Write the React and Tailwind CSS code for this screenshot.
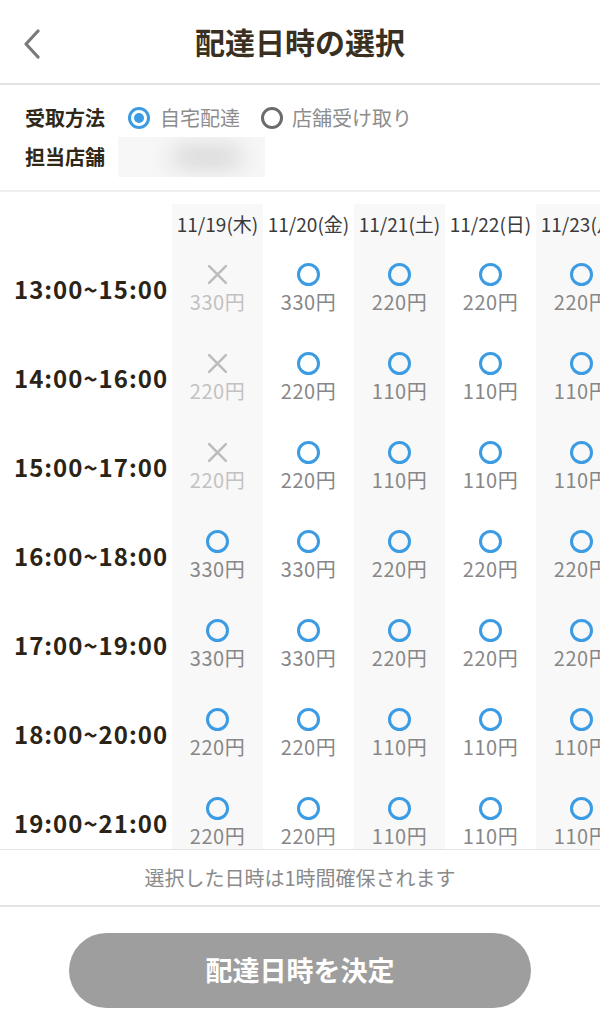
import React from 'react';

const font = { fontFamily: '"Noto Sans CJK JP", "Noto Sans", sans-serif' };

const dates = ['11/19(木)', '11/20(金)', '11/21(土)', '11/22(日)', '11/23(月)'];

// [time, [[available, price], ...]]
const slots = [
  ['13:00~15:00', [[false, 330], [true, 330], [true, 220], [true, 220], [true, 220]]],
  ['14:00~16:00', [[false, 220], [true, 220], [true, 110], [true, 110], [true, 110]]],
  ['15:00~17:00', [[false, 220], [true, 220], [true, 110], [true, 110], [true, 110]]],
  ['16:00~18:00', [[true, 330], [true, 330], [true, 220], [true, 220], [true, 220]]],
  ['17:00~19:00', [[true, 330], [true, 330], [true, 220], [true, 220], [true, 220]]],
  ['18:00~20:00', [[true, 220], [true, 220], [true, 110], [true, 110], [true, 110]]],
  ['19:00~21:00', [[true, 220], [true, 220], [true, 110], [true, 110], [true, 110]]],
];

const Radio = ({ checked }) => (
  <span
    className={`flex items-center justify-center w-[22px] h-[22px] rounded-full border-[3px] ${
      checked ? 'border-[#3b9be3]' : 'border-[#6b6b6b]'
    }`}
  >
    {checked && <span className="w-[10px] h-[10px] rounded-full bg-[#3b9be3]" />}
  </span>
);

const Cell = ({ ok, price }) => (
  <div className="flex flex-col items-center gap-[3px]">
    {ok ? (
      <span className="w-[23px] h-[23px] rounded-full border-[3px] border-[#3b9be3]" />
    ) : (
      <svg width="23" height="23" viewBox="0 0 22 22">
        <path d="M3 3 L19 19 M19 3 L3 19" stroke="#bcbcbc" strokeWidth="2.4" strokeLinecap="round" />
      </svg>
    )}
    <span className={`text-[20px] leading-[26px] tracking-[0.5px] ${ok ? 'text-[#878787]' : 'text-[#c2c2c2]'}`}>
      {price}円
    </span>
  </div>
);

export default function App() {
  return (
    <div className="w-[600px] h-[1030px] flex flex-col bg-white overflow-hidden" style={font}>
      {/* Header */}
      <div className="h-[85px] shrink-0 flex items-center border-b-2 border-[#e2e2e2] relative">
        <svg className="absolute left-[22px] top-[29px]" width="20" height="30" viewBox="0 0 20 30">
          <path d="M16 2 L4 15 L16 28" fill="none" stroke="#7a7a7a" strokeWidth="3.2" strokeLinecap="round" strokeLinejoin="round" />
        </svg>
        <h1 className="w-full text-center text-[30px] font-bold text-[#3a3021]">配達日時の選択</h1>
      </div>

      {/* Receive method */}
      <div className="h-[107px] shrink-0 border-b-2 border-[#eeeeee] px-[25px] pt-[19px] flex flex-col gap-[11px]">
        <div className="flex items-center h-[28px]">
          <span className="text-[20px] font-bold text-[#2f2818] w-[103px]">受取方法</span>
          <Radio checked />
          <span className="ml-[10px] text-[20px] text-[#8d8d8d]">自宅配達</span>
          <span className="ml-[21px]"><Radio /></span>
          <span className="ml-[9px] text-[20px] text-[#8d8d8d]">店舗受け取り</span>
        </div>
        <div className="flex items-center h-[28px]">
          <span className="text-[20px] font-bold text-[#2f2818] w-[93px]">担当店舗</span>
          <div className="w-[147px] h-[40px] bg-[#f7f7f7] flex items-center justify-center overflow-hidden">
            <div className="w-[70px] h-[16px] rounded-full bg-[#c9c9c9] blur-md ml-[30px]" />
          </div>
        </div>
      </div>

      {/* Schedule table */}
      <div className="flex-1 overflow-hidden pt-[12px]">
        <div className="flex w-max">
          <div className="w-[172px] shrink-0">
            <div className="h-[40px]" />
            {slots.map(([time]) => (
              <div key={time} className="h-[89px] flex items-center pl-[14px]">
                <span className="text-[24px] font-bold tracking-[1px] text-[#2b2416]">{time}</span>
              </div>
            ))}
          </div>
          {dates.map((d, ci) => (
            <div key={d} className={`w-[91px] shrink-0 ${ci % 2 === 0 ? 'bg-[#f8f8f8]' : 'bg-white'}`}>
              <div className="h-[40px] flex items-center justify-center whitespace-nowrap text-[19px] text-[#3a3a3a]">
                {d}
              </div>
              {slots.map(([time, cells]) => (
                <div key={time} className="h-[89px] flex items-center justify-center">
                  <Cell ok={cells[ci][0]} price={cells[ci][1]} />
                </div>
              ))}
            </div>
          ))}
        </div>
      </div>

      {/* Footer note */}
      <div className="h-[58px] shrink-0 border-t border-b-2 border-[#e4e4e4] flex items-center justify-center">
        <span className="text-[20px] text-[#8a8a8a]">選択した日時は1時間確保されます</span>
      </div>

      {/* Submit */}
      <div className="h-[123px] shrink-0 flex justify-center pt-[26px]">
        <button className="w-[462px] h-[75px] rounded-full bg-[#9e9e9e] text-white text-[27px] font-bold">
          配達日時を決定
        </button>
      </div>
    </div>
  );
}
